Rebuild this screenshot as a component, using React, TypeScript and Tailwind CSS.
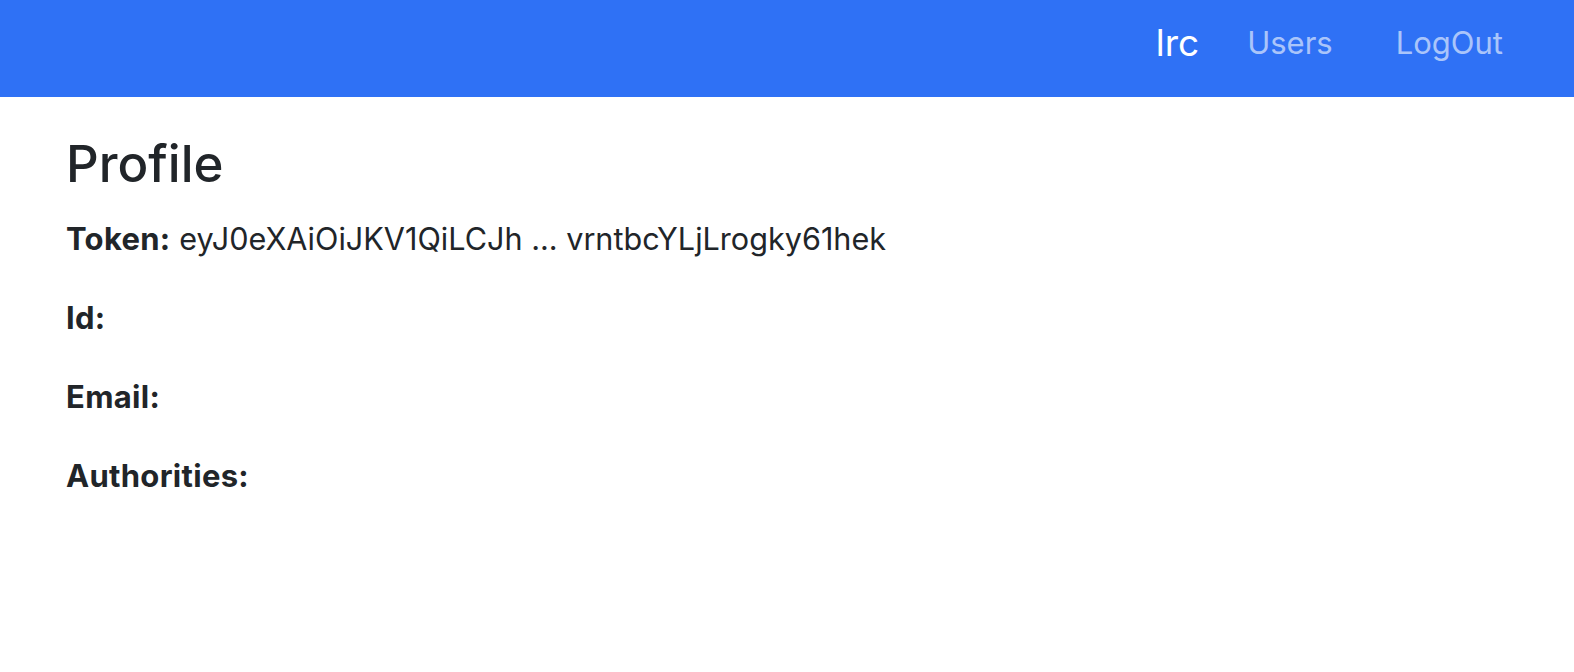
export default function App() {
  return (
    <div className="min-h-[672px] bg-white text-[#212529]" style={{ fontFamily: "Inter, 'Noto Sans', sans-serif" }}>
      <nav className="h-[97px] bg-[#2f71f5] flex items-center justify-end pr-[71px] pb-[12px]">
        <a className="text-[37px] text-white leading-none mr-[48px]">lrc</a>
        <a className="text-[31px] text-white/60 leading-none mr-[63px]">Users</a>
        <a className="text-[31px] text-white/60 leading-none">LogOut</a>
      </nav>
      <main className="px-[66px] pt-[36px]">
        <h1 className="text-[51px] font-medium leading-[1.2] mb-[22px]">Profile</h1>
        <div className="flex flex-col gap-[34px] text-[31px] leading-[45px]">
          <p>
            <b className="font-bold tracking-[0.3px]">Token:</b>{" "}
            <span className="text-[30.6px]">eyJ0eXAiOiJKV1QiLCJh ... vrntbcYLjLrogky61hek</span>
          </p>
          <p><b className="font-bold tracking-[0.3px]">Id:</b></p>
          <p><b className="font-bold tracking-[0.3px]">Email:</b></p>
          <p><b className="font-bold tracking-[0.3px]">Authorities:</b></p>
        </div>
      </main>
    </div>
  );
}
